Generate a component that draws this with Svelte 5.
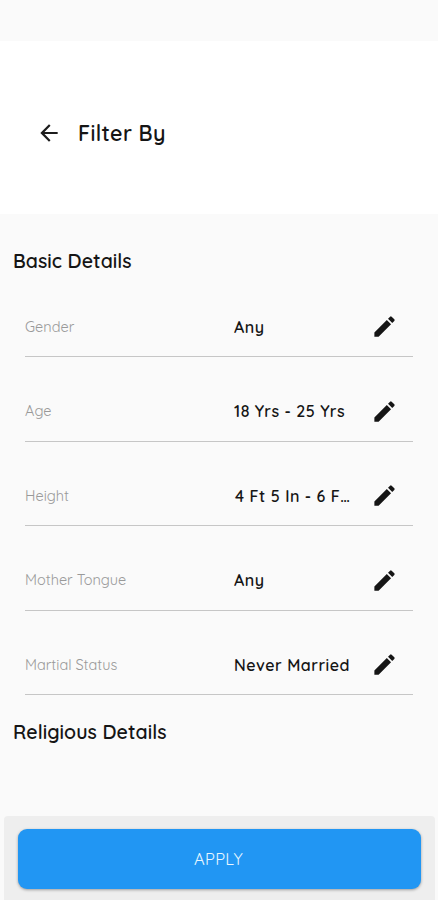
<script lang="ts">
  interface Detail {
    id: string;
    label: string;
    value: string;
  }

  const basicDetails: Detail[] = [
    { id: 'gender', label: 'Gender', value: 'Any' },
    { id: 'age', label: 'Age', value: '18 Yrs - 25 Yrs' },
    { id: 'height', label: 'Height', value: '4 Ft 5 In - 6 F…' },
    { id: 'tongue', label: 'Mother Tongue', value: 'Any' },
    { id: 'status', label: 'Martial Status', value: 'Never Married' }
  ];
</script>

<div class="screen">
  <div class="status-bar"></div>

  <header class="header">
    <button class="icon-button" aria-label="Back">
      <svg class="back-icon" viewBox="0 0 24 24">
        <path d="M20 11H7.83l5.59-5.59L12 4l-8 8 8 8 1.41-1.41L7.83 13H20v-2z" />
      </svg>
    </button>
    <h1>Filter By</h1>
  </header>

  <main class="content">
    <h2>Basic Details</h2>

    <div class="rows">
      {#each basicDetails as detail (detail.id)}
        <div class="row">
          <span class="label">{detail.label}</span>
          <span class="value" class:indented={detail.id === 'height'}>{detail.value}</span>
          <button class="icon-button" aria-label="Edit {detail.label}">
            <svg class="edit-icon" viewBox="0 0 24 24">
              <path d="M3 17.25V21h3.75L17.81 9.94l-3.75-3.75L3 17.25zM20.71 7.04a1 1 0 0 0 0-1.41l-2.34-2.34a1 1 0 0 0-1.41 0l-1.83 1.83 3.75 3.75 1.83-1.83z" />
            </svg>
          </button>
        </div>
      {/each}
    </div>

    <h2 class="religious">Religious Details</h2>
  </main>

  <footer class="footer">
    <button class="apply">APPLY</button>
  </footer>
</div>

<style>
  :global(body) {
    background: #fafafa;
  }

  .screen {
    display: flex;
    flex-direction: column;
    width: 438px;
    height: 900px;
    overflow: hidden;
    background: #fafafa;
    color: #151515;
    font-family: Quicksand, Lato, sans-serif;
  }

  .status-bar {
    flex: none;
    height: 41px;
  }

  .header {
    flex: none;
    display: flex;
    align-items: center;
    height: 173px;
    padding: 0 0 0 36px;
    box-sizing: border-box;
    background: #fff;
  }

  .header h1 {
    margin: 10px 0 0 16px;
    font-size: 21.5px;
    line-height: 28px;
    font-weight: 600;
    letter-spacing: 0.35px;
  }

  .header .icon-button {
    margin-top: 11px;
  }

  .icon-button {
    display: flex;
    padding: 0;
    border: 0;
    background: none;
    cursor: pointer;
  }

  .back-icon {
    width: 26px;
    height: 26px;
    fill: #1c1c1c;
  }

  .content {
    flex: 1;
    min-height: 0;
    padding-top: 35px;
  }

  h2 {
    margin: 0 0 0 13px;
    font-size: 19.5px;
    line-height: 24px;
    font-weight: 600;
    letter-spacing: 0.05px;
  }

  .religious {
    margin-top: 25px;
  }

  .rows {
    margin: 0 25px;
  }

  .row {
    display: grid;
    grid-template-columns: 209px 137px 27px;
    align-items: center;
    height: 84.5px;
    padding-top: 24.5px;
    box-sizing: border-box;
    border-bottom: 1px solid #c6c6c6;
  }

  .rows .row:first-child {
    height: 84px;
    padding-top: 24px;
  }

  .label {
    color: #999;
    font-size: 14.5px;
    line-height: 18px;
    font-weight: 400;
  }

  .value {
    font-size: 16px;
    line-height: 20px;
    font-weight: 600;
    letter-spacing: 0.5px;
    white-space: nowrap;
  }

  .indented {
    padding-left: 1px;
  }

  .edit-icon {
    width: 29px;
    height: 29px;
    fill: #151515;
  }

  .footer {
    flex: none;
    height: 84px;
    margin: 0 3px 0 4px;
    padding: 13px 14px 11px;
    box-sizing: border-box;
    border-radius: 4px 4px 0 0;
    background: #eee;
  }

  .apply {
    width: 100%;
    height: 60px;
    padding: 0 2px 2px 0;
    border: 0;
    border-radius: 9px;
    background: #2196f3;
    box-shadow: 0 1px 3px rgba(0, 0, 0, 0.35);
    color: #e8f6ff;
    font-family: Quicksand, Lato, sans-serif;
    font-size: 16.5px;
    font-weight: 400;
    letter-spacing: 0.3px;
    cursor: pointer;
  }
</style>
